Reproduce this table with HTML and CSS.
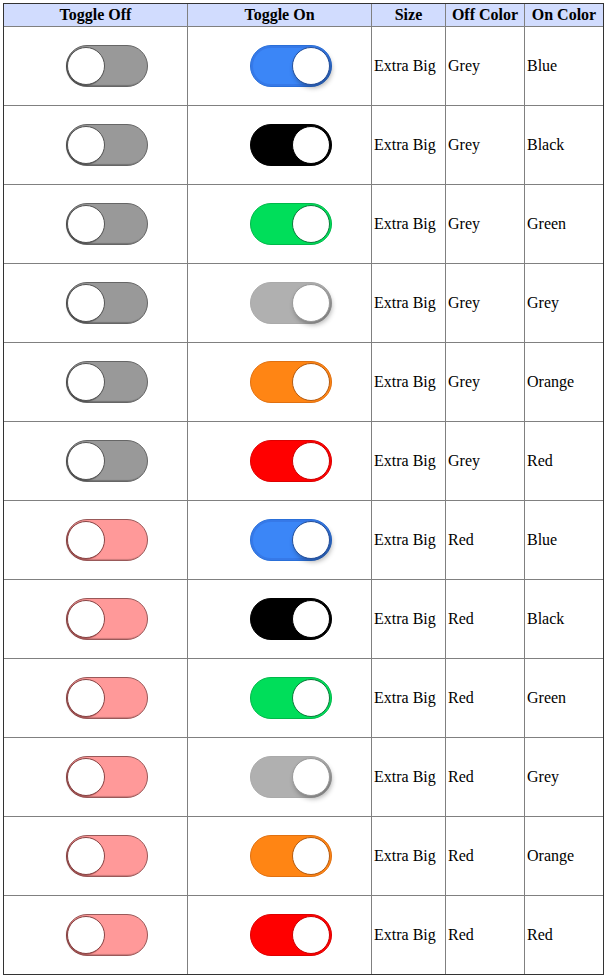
FILE: index.html
```html
<!DOCTYPE html>
<html>
<head>
<meta charset="utf-8">
<link rel="stylesheet" href="styles.css">
</head>
<body>
<table class="grid">
  <colgroup>
    <col class="c-off"><col class="c-on"><col class="c-size"><col class="c-oc"><col class="c-nc">
  </colgroup>
  <thead>
    <tr><th>Toggle Off</th><th>Toggle On</th><th>Size</th><th>Off Color</th><th>On Color</th></tr>
  </thead>
  <tbody>
    <tr><td class="tc"><span class="tg off grey"><span class="knob"></span></span></td><td class="tc"><span class="tg on blue"><span class="knob"></span></span></td><td>Extra Big</td><td>Grey</td><td>Blue</td></tr>
    <tr><td class="tc"><span class="tg off grey"><span class="knob"></span></span></td><td class="tc"><span class="tg on black"><span class="knob"></span></span></td><td>Extra Big</td><td>Grey</td><td>Black</td></tr>
    <tr><td class="tc"><span class="tg off grey"><span class="knob"></span></span></td><td class="tc"><span class="tg on green"><span class="knob"></span></span></td><td>Extra Big</td><td>Grey</td><td>Green</td></tr>
    <tr><td class="tc"><span class="tg off grey"><span class="knob"></span></span></td><td class="tc"><span class="tg on lgrey"><span class="knob"></span></span></td><td>Extra Big</td><td>Grey</td><td>Grey</td></tr>
    <tr><td class="tc"><span class="tg off grey"><span class="knob"></span></span></td><td class="tc"><span class="tg on orange"><span class="knob"></span></span></td><td>Extra Big</td><td>Grey</td><td>Orange</td></tr>
    <tr><td class="tc"><span class="tg off grey"><span class="knob"></span></span></td><td class="tc"><span class="tg on red"><span class="knob"></span></span></td><td>Extra Big</td><td>Grey</td><td>Red</td></tr>
    <tr><td class="tc"><span class="tg off pink"><span class="knob"></span></span></td><td class="tc"><span class="tg on blue"><span class="knob"></span></span></td><td>Extra Big</td><td>Red</td><td>Blue</td></tr>
    <tr><td class="tc"><span class="tg off pink"><span class="knob"></span></span></td><td class="tc"><span class="tg on black"><span class="knob"></span></span></td><td>Extra Big</td><td>Red</td><td>Black</td></tr>
    <tr><td class="tc"><span class="tg off pink"><span class="knob"></span></span></td><td class="tc"><span class="tg on green"><span class="knob"></span></span></td><td>Extra Big</td><td>Red</td><td>Green</td></tr>
    <tr><td class="tc"><span class="tg off pink"><span class="knob"></span></span></td><td class="tc"><span class="tg on lgrey"><span class="knob"></span></span></td><td>Extra Big</td><td>Red</td><td>Grey</td></tr>
    <tr><td class="tc"><span class="tg off pink"><span class="knob"></span></span></td><td class="tc"><span class="tg on orange"><span class="knob"></span></span></td><td>Extra Big</td><td>Red</td><td>Orange</td></tr>
    <tr><td class="tc"><span class="tg off pink"><span class="knob"></span></span></td><td class="tc"><span class="tg on red"><span class="knob"></span></span></td><td>Extra Big</td><td>Red</td><td>Red</td></tr>
  </tbody>
</table>
</body>
</html>
```

FILE: styles.css
```css
html, body {
  margin: 0;
  padding: 0;
  background: #fff;
}
body {
  padding: 3px;
  font-family: "Liberation Serif", "Times New Roman", serif;
  font-size: 16px;
  color: #000;
}
.grid {
  width: 601px;
  table-layout: fixed;
  border-collapse: separate;
  border-spacing: 0;
  border: 1px solid #333;
  font-family: "Liberation Serif", "Times New Roman", serif;
  font-size: 16px;
}
.c-off { width: 184px; }
.c-on { width: 184px; }
.c-size { width: 74px; }
.c-oc { width: 79px; }
.c-nc { width: 78px; }

.grid th, .grid td {
  border-right: 1px solid #808080;
  border-bottom: 1px solid #808080;
}
.grid th:last-child, .grid td:last-child { border-right: none; }
.grid tbody tr:last-child td { border-bottom: none; }

.grid th {
  background: #d1dcfe;
  font-weight: bold;
  text-align: center;
  padding: 2px 2px;
  line-height: 18px;
  height: 18px;
  white-space: nowrap;
}
.grid td {
  height: 78px;
  padding: 0 2px;
  text-align: left;
  vertical-align: middle;
  white-space: nowrap;
}
.grid td.tc { text-align: center; }

.tg {
  display: inline-flex;
  align-items: center;
  box-sizing: border-box;
  width: 82px;
  height: 42px;
  border-radius: 21px;
  border: 1px solid;
  margin-left: 22px;
  vertical-align: middle;
  padding: 0 1px;
}
.knob {
  box-sizing: border-box;
  width: 38px;
  height: 38px;
  border-radius: 50%;
  background: #fff;
  border: 1px solid;
}
.tg.off { justify-content: flex-start; padding-left: 0; }
.tg.on { justify-content: flex-end; padding-right: 1px; }

.tg.off.grey {
  background: #999;
  border-color: #666;
  box-shadow: inset 1px -1px 1px rgba(0,0,0,0.25);
}
.tg.off.grey .knob {
  border-color: #555;
  box-shadow: -1px 1px 1px rgba(0,0,0,0.35);
}
.tg.off.pink {
  background: #ff9999;
  border-color: #995959;
  box-shadow: inset 1px -1px 1px rgba(0,0,0,0.2);
}
.tg.off.pink .knob {
  border-color: #884444;
  box-shadow: -1px 1px 1px rgba(80,0,0,0.35);
}

.tg.on .knob {
  box-shadow: 2px 3px 5px rgba(0,0,0,0.3);
}
.tg.on.blue {
  background: #3b86f7;
  border-color: #2a6fd8;
  box-shadow: inset 0 0 0 2px #3679e8;
}
.tg.on.blue .knob { border-color: #244f9a; }
.tg.on.black { background: #000; border-color: #000; }
.tg.on.black .knob { border-color: #000; box-shadow: none; }
.tg.on.green { background: #00de5a; border-color: #00b84a; }
.tg.on.green .knob { border-color: #0a7a3a; box-shadow: none; }
.tg.on.lgrey { background: #b0b0b0; border-color: #aaa; }
.tg.on.lgrey .knob { border-color: #999; }
.tg.on.orange { background: #ff8514; border-color: #e07010; }
.tg.on.orange .knob { border-color: #b45a10; box-shadow: none; }
.tg.on.red { background: #ff0000; border-color: #dd0000; }
.tg.on.red .knob { border-color: #cc0000; box-shadow: none; }
```
